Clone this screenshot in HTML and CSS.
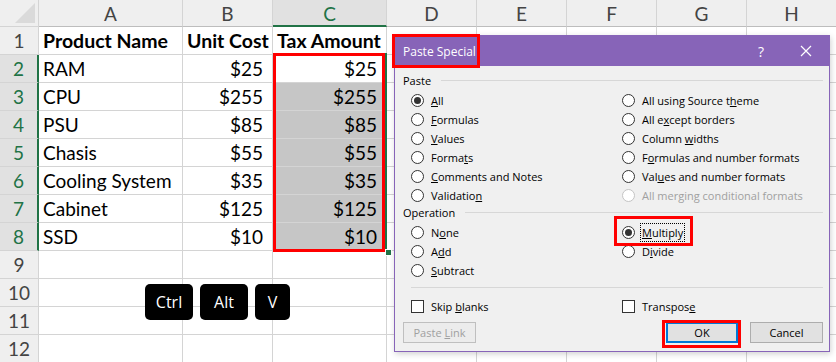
FILE: index.html
```html
<!DOCTYPE html>
<html lang="en">
<head>
    <meta charset="UTF-8">
    <meta name="viewport" content="width=device-width, initial-scale=1.0">
    <link rel="stylesheet" href="styles.css">
    <title>Paste Special - Multiply</title>
</head>
<body>
    <div class="sheet">
        <div class="grid">
            <div class="corner"><span class="tri"></span></div>
            <div class="col-head">A</div>
            <div class="col-head">B</div>
            <div class="col-head sel">C</div>
            <div class="col-head">D</div>
            <div class="col-head">E</div>
            <div class="col-head">F</div>
            <div class="col-head">G</div>
            <div class="col-head">H</div>

            <div class="row-head">1</div>
            <div class="cell bold">Product Name</div>
            <div class="cell bold">Unit Cost</div>
            <div class="cell bold">Tax Amount</div>
            <div class="cell"></div><div class="cell"></div><div class="cell"></div><div class="cell"></div><div class="cell"></div>

            <div class="row-head sel">2</div>
            <div class="cell">RAM</div>
            <div class="cell num">$25</div>
            <div class="cell num">$25</div>
            <div class="cell"></div><div class="cell"></div><div class="cell"></div><div class="cell"></div><div class="cell"></div>

            <div class="row-head sel">3</div>
            <div class="cell">CPU</div>
            <div class="cell num">$255</div>
            <div class="cell num hl">$255</div>
            <div class="cell"></div><div class="cell"></div><div class="cell"></div><div class="cell"></div><div class="cell"></div>

            <div class="row-head sel">4</div>
            <div class="cell">PSU</div>
            <div class="cell num">$85</div>
            <div class="cell num hl">$85</div>
            <div class="cell"></div><div class="cell"></div><div class="cell"></div><div class="cell"></div><div class="cell"></div>

            <div class="row-head sel">5</div>
            <div class="cell">Chasis</div>
            <div class="cell num">$55</div>
            <div class="cell num hl">$55</div>
            <div class="cell"></div><div class="cell"></div><div class="cell"></div><div class="cell"></div><div class="cell"></div>

            <div class="row-head sel">6</div>
            <div class="cell">Cooling System</div>
            <div class="cell num">$35</div>
            <div class="cell num hl">$35</div>
            <div class="cell"></div><div class="cell"></div><div class="cell"></div><div class="cell"></div><div class="cell"></div>

            <div class="row-head sel">7</div>
            <div class="cell">Cabinet</div>
            <div class="cell num">$125</div>
            <div class="cell num hl">$125</div>
            <div class="cell"></div><div class="cell"></div><div class="cell"></div><div class="cell"></div><div class="cell"></div>

            <div class="row-head sel">8</div>
            <div class="cell">SSD</div>
            <div class="cell num">$10</div>
            <div class="cell num hl">$10</div>
            <div class="cell"></div><div class="cell"></div><div class="cell"></div><div class="cell"></div><div class="cell"></div>

            <div class="row-head">9</div>
            <div class="cell"></div><div class="cell"></div><div class="cell"></div><div class="cell"></div><div class="cell"></div><div class="cell"></div><div class="cell"></div><div class="cell"></div>
            <div class="row-head">10</div>
            <div class="cell"></div><div class="cell"></div><div class="cell"></div><div class="cell"></div><div class="cell"></div><div class="cell"></div><div class="cell"></div><div class="cell"></div>
            <div class="row-head">11</div>
            <div class="cell"></div><div class="cell"></div><div class="cell"></div><div class="cell"></div><div class="cell"></div><div class="cell"></div><div class="cell"></div><div class="cell"></div>
            <div class="row-head">12</div>
            <div class="cell"></div><div class="cell"></div><div class="cell"></div><div class="cell"></div><div class="cell"></div><div class="cell"></div><div class="cell"></div><div class="cell"></div>
        </div>

        <!-- selection C2:C8 -->
        <div class="range-mark"></div>
        <div class="fill-handle"></div>

        <div class="keys">
            <span class="key">Ctrl</span>
            <span class="key">Alt</span>
            <span class="key key-v">V</span>
        </div>

        <div class="dialog">
            <div class="titlebar">
                <span class="title">Paste Special</span>
                <span class="help">?</span>
                <svg class="close" width="12" height="12" viewBox="0 0 12 12">
                    <path d="M1 1 L11 11 M11 1 L1 11" stroke="#fff" stroke-width="1.2" fill="none"/>
                </svg>
            </div>
            <div class="title-mark"></div>

            <div class="body">
                <div class="group-label">Paste</div>
                <div class="options">
                    <label class="opt"><span class="radio on"></span><span><u>A</u>ll</span></label>
                    <label class="opt"><span class="radio"></span><span>All using Source t<u>h</u>eme</span></label>
                    <label class="opt"><span class="radio"></span><span><u>F</u>ormulas</span></label>
                    <label class="opt"><span class="radio"></span><span>All e<u>x</u>cept borders</span></label>
                    <label class="opt"><span class="radio"></span><span><u>V</u>alues</span></label>
                    <label class="opt"><span class="radio"></span><span>Column <u>w</u>idths</span></label>
                    <label class="opt"><span class="radio"></span><span>Forma<u>t</u>s</span></label>
                    <label class="opt"><span class="radio"></span><span>F<u>o</u>rmulas and number formats</span></label>
                    <label class="opt"><span class="radio"></span><span><u>C</u>omments and Notes</span></label>
                    <label class="opt"><span class="radio"></span><span>Val<u>u</u>es and number formats</span></label>
                    <label class="opt"><span class="radio"></span><span>Validatio<u>n</u></span></label>
                    <label class="opt off"><span class="radio"></span><span>All mer<u>g</u>ing conditional formats</span></label>
                </div>

                <div class="group-label op">Operation</div>
                <div class="options">
                    <label class="opt"><span class="radio"></span><span>N<u>o</u>ne</span></label>
                    <label class="opt"><span class="radio on"></span><span class="focus"><u>M</u>ultiply</span></label>
                    <label class="opt"><span class="radio"></span><span>A<u>d</u>d</span></label>
                    <label class="opt"><span class="radio"></span><span>D<u>i</u>vide</span></label>
                    <label class="opt"><span class="radio"></span><span><u>S</u>ubtract</span></label>
                </div>

                <div class="sep"></div>

                <div class="options checks">
                    <label class="opt"><span class="check"></span><span>Skip <u>b</u>lanks</span></label>
                    <label class="opt"><span class="check"></span><span>Transpos<u>e</u></span></label>
                </div>

                <div class="buttons">
                    <button class="btn" disabled>Paste <u>L</u>ink</button>
                    <button class="btn ok">OK</button>
                    <button class="btn">Cancel</button>
                </div>
            </div>

            <div class="multiply-mark"></div>
            <div class="ok-mark"></div>
        </div>
    </div>
</body>
</html>
```

FILE: styles.css
```css
body {
    margin: 0;
    background: #fff;
    font-family: Lato, "Liberation Sans", sans-serif;
}

.sheet {
    position: relative;
    width: 836px;
    height: 362px;
    overflow: hidden;
}

.grid {
    display: grid;
    grid-template-columns: 39px 144px 90px 114px 90px 90px 90px 90px 90px;
    grid-template-rows: 27px repeat(12, 28px);
}

.grid > div {
    box-sizing: border-box;
    border-right: 1px solid #d4d4d4;
    border-bottom: 1px solid #d4d4d4;
}

.corner {
    position: relative;
    background: #efefef;
}

.tri {
    position: absolute;
    right: 3px;
    bottom: 3px;
    width: 0;
    height: 0;
    border-left: 20px solid transparent;
    border-bottom: 20px solid #dadada;
}

.col-head {
    background: #efefef;
    color: #444;
    font-size: 19px;
    text-align: center;
    line-height: 27px;
    border-bottom-color: #bdbdbd !important;
}

.col-head.sel {
    background: #e1e1e1;
    color: #217346;
    border-bottom: 2px solid #217346 !important;
}

.row-head {
    background: #efefef;
    color: #444;
    font-size: 19px;
    text-align: center;
    line-height: 28px;
}

.row-head.sel {
    background: #e1e1e1;
    color: #217346;
    border-right: 2px solid #217346 !important;
}

.cell {
    font-size: 19px;
    line-height: 28px;
    padding: 0 4px;
    white-space: nowrap;
    color: #000;
}

.bold {
    font-weight: bold;
    font-size: 19.5px;
}

.num {
    text-align: right;
    padding-right: 9px;
}

.hl {
    background: #c6c6c6;
}

.range-mark {
    position: absolute;
    left: 273px;
    top: 53px;
    width: 112px;
    height: 199px;
    box-sizing: border-box;
    border: 3px solid #ff0000;
    box-shadow: 2px 0 0 #217346;
}

.fill-handle {
    position: absolute;
    left: 385px;
    top: 249px;
    width: 5px;
    height: 5px;
    background: #217346;
    border: 1px solid #fff;
}

/* keyboard shortcut */
.keys {
    position: absolute;
    left: 145px;
    top: 284px;
    display: flex;
    gap: 7px;
}

.key {
    width: 48px;
    height: 36px;
    background: #000;
    color: #fff;
    border-radius: 5px;
    font-family: "Open Sans", sans-serif;
    font-size: 16px;
    display: flex;
    align-items: center;
    justify-content: center;
}

.key-v {
    width: 35px;
}

/* dialog */
.dialog {
    position: absolute;
    left: 394px;
    top: 35px;
    width: 436px;
    height: 317px;
    box-sizing: border-box;
    border: 1px solid #8764b8;
    background: #f0f0f0;
    box-shadow: 1px 2px 6px rgba(0, 0, 0, 0.18);
    font-family: "Open Sans", sans-serif;
    font-size: 11px;
    color: #000;
}

.titlebar {
    height: 30px;
    background: #8764b8;
    color: #fff;
    display: flex;
    align-items: center;
    padding-left: 8px;
}

.title {
    font-size: 12px;
    flex: 1;
}

.help {
    font-size: 14px;
    width: 46px;
    margin-right: 16px;
    text-align: center;
}

.close {
    margin: 0 17px 0 0;
}

.title-mark {
    position: absolute;
    left: -3px;
    top: -2px;
    width: 88px;
    height: 34px;
    box-sizing: border-box;
    border: 3px solid #ff0000;
}

.body {
    padding: 6px 6px 0 8px;
}

.group-label {
    display: flex;
    align-items: center;
    height: 16px;
}

.group-label::after {
    content: "";
    flex: 1;
    height: 1px;
    background: #d7d7d7;
    margin-left: 10px;
}

.group-label.op {
    margin-top: -1px;
}

.options {
    display: grid;
    grid-template-columns: 211px 1fr;
    grid-auto-rows: 19px;
    padding-left: 8px;
    margin-top: 3px;
}

.options.checks {
    margin-top: 9px;
}

.opt {
    display: flex;
    align-items: center;
    white-space: nowrap;
}

.opt.off {
    color: #a0a0a0;
}

.radio {
    width: 13px;
    height: 13px;
    box-sizing: border-box;
    border: 1px solid #333;
    border-radius: 50%;
    background: #fff;
    margin-right: 7px;
    display: flex;
    align-items: center;
    justify-content: center;
}

.radio.on::after {
    content: "";
    width: 7px;
    height: 7px;
    border-radius: 50%;
    background: #333;
}

.opt.off .radio {
    border-color: #c4c4c4;
}

.check {
    width: 13px;
    height: 13px;
    box-sizing: border-box;
    border: 1px solid #333;
    background: #fff;
    margin-right: 7px;
}

.focus {
    outline: 1px dotted #000;
    outline-offset: 1px;
}

.sep {
    height: 1px;
    background: #d7d7d7;
    margin: 7px 0 0 8px;
}

.buttons {
    display: flex;
    gap: 12px;
    margin-top: 6px;
}

.btn {
    box-sizing: border-box;
    height: 21px;
    width: 73px;
    padding: 0;
    background: #e1e1e1;
    border: 1px solid #adadad;
    font-family: "Open Sans", sans-serif;
    font-size: 11px;
    color: #000;
}

.btn:disabled {
    background: #ececec;
    border-color: #bfbfbf;
    color: #a0a0a0;
}

.btn.ok {
    margin-left: auto;
    width: 72px;
    border: 2px solid #0078d7;
}

.multiply-mark {
    position: absolute;
    left: 219px;
    top: 180px;
    width: 79px;
    height: 30px;
    box-sizing: border-box;
    border: 3px solid #ff0000;
}

.ok-mark {
    position: absolute;
    left: 267px;
    top: 284px;
    width: 79px;
    height: 28px;
    box-sizing: border-box;
    border: 3px solid #ff0000;
}
```
